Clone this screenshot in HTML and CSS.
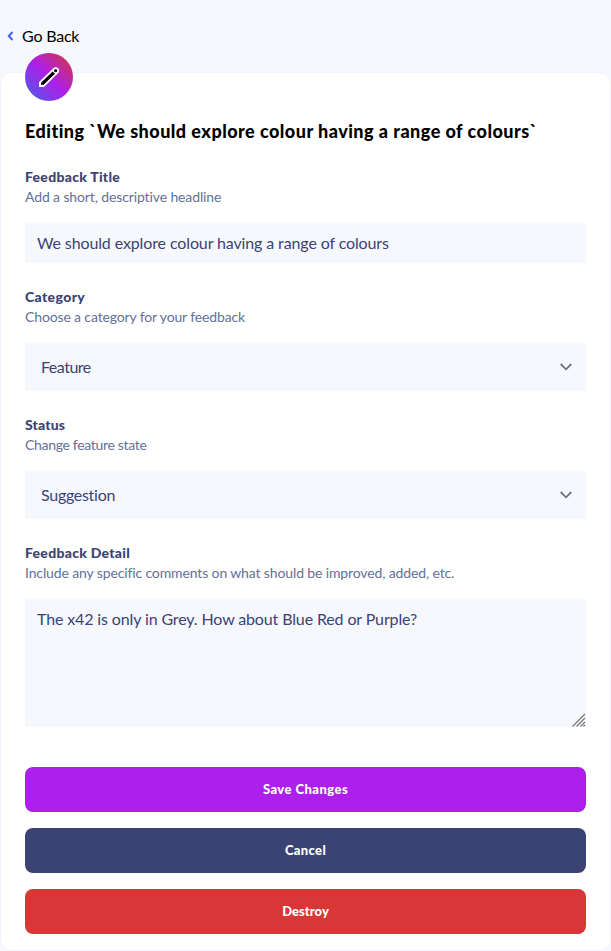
FILE: index.html
```html
<!DOCTYPE html>
<html lang="en">
<head>
<meta charset="utf-8">
<title>Edit Feedback</title>
<link rel="stylesheet" href="styles.css">
</head>
<body>
<a class="back"><svg width="7" height="10" viewBox="0 0 7 10"><path d="M5.500 1 1.800 5l3.700 4" fill="none" stroke="#4661e6" stroke-width="2"/></svg><span class="t-back">Go Back</span></a>
<main class="card">
  <div class="badge">
    <svg width="24" height="24" viewBox="0 0 24 24"><path d="M2 22v-5L16.400 3.200a3.400 3.400 0 0 1 4.800 4.800L7 22Z" fill="#fff"/><path d="m4 20 .2-2.500L15.700 6.500l2.300 2.300L6.600 19.800Z" fill="#000"/><circle cx="18.700" cy="5.700" r="1.600" fill="#000"/></svg>
  </div>
  <h1><span class="t-title">Editing `We should explore colour having a range of colours`</span></h1>
  <form>
    <section class="field">
      <h2 class="t-l1">Feedback Title</h2>
      <p class="t-h1">Add a short, descriptive headline</p>
      <div class="box input"><span class="t-input">We should explore colour having a range of colours</span></div>
    </section>
    <section class="field">
      <h2 class="t-l2">Category</h2>
      <p class="t-h2">Choose a category for your feedback</p>
      <div class="box select"><span class="t-feature">Feature</span><svg width="14" height="8" viewBox="0 0 14 8"><path d="m1.700 1 5.300 5.300L12.300 1" fill="none" stroke="#6b7280" stroke-width="1.800"/></svg></div>
    </section>
    <section class="field">
      <h2 class="t-l3">Status</h2>
      <p class="t-h3">Change feature state</p>
      <div class="box select"><span class="t-suggestion">Suggestion</span><svg width="14" height="8" viewBox="0 0 14 8"><path d="m1.700 1 5.300 5.300L12.300 1" fill="none" stroke="#6b7280" stroke-width="1.800"/></svg></div>
    </section>
    <section class="field">
      <h2 class="t-l4">Feedback Detail</h2>
      <p class="t-h4">Include any specific comments on what should be improved, added, etc.</p>
      <div class="box area"><span class="t-area">The x42 is only in Grey. How about Blue Red or Purple?</span><svg class="grip" width="14" height="14" viewBox="0 0 14 14"><path d="M.500 13.500 13 1M4.500 13.500 13 5M8.500 13.500 13 9M11.500 13.500l1.500-1.500" fill="none" stroke="#777" stroke-width="1.200"/></svg></div>
    </section>
    <div class="actions">
      <button type="button" class="save"><span class="t-save">Save Changes</span></button>
      <button type="button" class="cancel"><span class="t-cancel">Cancel</span></button>
      <button type="button" class="destroy"><span class="t-destroy">Destroy</span></button>
    </div>
  </form>
</main>
</body>
</html>
```
FILE: styles.css
```css
* { box-sizing: border-box; }
body { margin: 0; background: #f7f8fd; font: 16px/24px Lato, sans-serif; color: #000; }
.back { display: flex; align-items: center; gap: 8px; height: 24px; margin: 24px 0 24px 7px; }
.card { height: 879px; border: 1px solid #f2f2fe; border-radius: 12px; background: #fff; padding: 0 24px; }
.badge { display: flex; align-items: center; justify-content: center; width: 48px; height: 48px; margin-top: -20px; border-radius: 50%; background: linear-gradient(45deg, #4661e6 0%, #ad1fea 50%, #d73737 100%); }
h1 { margin: 16px 0 22px; font-size: 18px; line-height: 28px; font-weight: 900; white-space: nowrap; }
.field { margin-bottom: 24px; white-space: nowrap; }
h2 { margin: 0; font-size: 14px; line-height: 20px; font-weight: 900; color: #3a4374; }
p { margin: 0 0 16px; font-size: 14px; line-height: 20px; color: #647196; }
.box { display: flex; background: #f7f8fd; color: #3a4374; }
.input { height: 40px; align-items: center; padding: 0 12px; }
.select { height: 48px; align-items: center; justify-content: space-between; padding: 0 13px 0 16px; }
.area { position: relative; height: 128px; padding: 8px 12px; }
.grip { position: absolute; right: 0; bottom: 0; }
.actions { display: grid; gap: 16px; margin-top: 40px; }
button { height: 45px; border: 0; border-radius: 8px; color: #fff; font: 900 13px/20px Lato, sans-serif; padding: 0 0 1px; }
.save { background: #ad1fea; }
.cancel { background: #3a4374; }
.destroy { background: #d73737; }

.t-back { letter-spacing: -0.2px; }
.t-title { letter-spacing: 0.47px; }
.t-l1, .t-l4 { letter-spacing: 0.28px; }
.t-l2 { letter-spacing: 0.37px; }
.t-l3 { letter-spacing: 0.15px; }
.t-h1 { letter-spacing: -0.12px; }
.t-h2 { letter-spacing: -0.14px; }
.t-h3 { letter-spacing: -0.32px; }
.t-h4 { letter-spacing: -0.13px; }
.t-input { letter-spacing: -0.12px; }
.t-feature { letter-spacing: -0.5px; }
.t-suggestion { letter-spacing: -0.28px; }
.t-area { letter-spacing: -0.13px; }
.t-save { letter-spacing: 0.45px; }
.t-cancel { letter-spacing: 0.35px; }
.t-destroy { letter-spacing: 0.05px; }
```
